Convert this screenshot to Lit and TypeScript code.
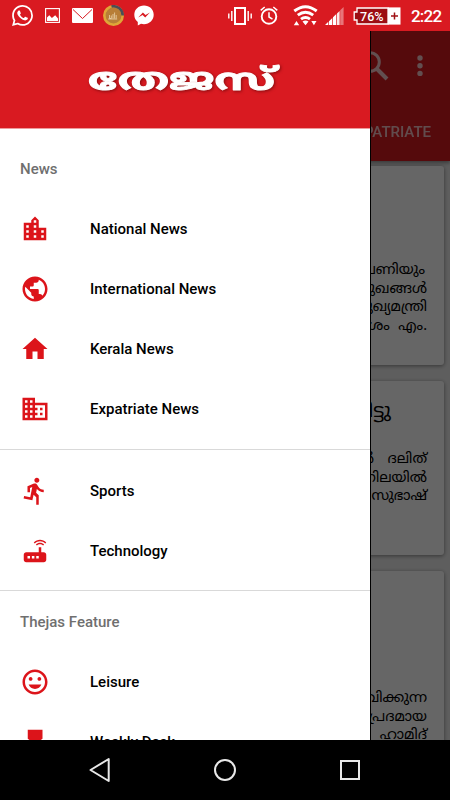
import { LitElement, html, css } from "lit";
import { customElement, property } from "lit/decorators.js";

const ICONS: Record<string, string> = {
  city: "M15 11V5l-3-3-3 3v2H3v14h18V11h-6zm-8 8H5v-2h2v2zm0-4H5v-2h2v2zm0-4H5V9h2v2zm6 8h-2v-2h2v2zm0-4h-2v-2h2v2zm0-4h-2V9h2v2zm0-4h-2V5h2v2zm6 12h-2v-2h2v2zm0-4h-2v-2h2v2z",
  globe: "M12 2C6.48 2 2 6.48 2 12s4.48 10 10 10 10-4.48 10-10S17.52 2 12 2zm-1 17.93c-3.95-.49-7-3.85-7-7.93 0-.62.08-1.21.21-1.79L9 15v1c0 1.1.9 2 2 2v1.93zm6.9-2.54c-.26-.81-1-1.39-1.9-1.39h-1v-3c0-.55-.45-1-1-1H8v-2h2c.55 0 1-.45 1-1V7h2c1.1 0 2-.9 2-2v-.41c2.93 1.19 5 4.06 5 7.41 0 2.08-.8 3.97-2.1 5.39z",
  home: "M10 20v-6h4v6h5v-8h3L12 3 2 12h3v8z",
  domain: "M12 7V3H2v18h20V7H12zM6 19H4v-2h2v2zm0-4H4v-2h2v2zm0-4H4V9h2v2zm0-4H4V5h2v2zm4 12H8v-2h2v2zm0-4H8v-2h2v2zm0-4H8V9h2v2zm0-4H8V5h2v2zm10 12h-8v-2h2v-2h-2v-2h2v-2h-2V9h8v10zm-2-8h-2v2h2v-2zm0 4h-2v2h2v-2z",
  run: "M13.49 5.48c1.1 0 2-.9 2-2s-.9-2-2-2-2 .9-2 2 .9 2 2 2zm-3.6 13.9l1-4.4 2.1 2v6h2v-7.5l-2.1-2 .6-3c1.3 1.5 3.3 2.5 5.5 2.5v-2c-1.9 0-3.5-1-4.3-2.4l-1-1.6c-.4-.6-1-1-1.7-1-.3 0-.5.1-.8.1l-5.2 2.2v4.7h2v-3.4l1.8-.7-1.6 8.1-4.9-1-.4 2 7 1.4z",
  router: "M20.2 5.9l.8-.8C19.6 3.7 17.8 3 16 3s-3.6.7-5 2.1l.8.8C13 4.8 14.5 4.2 16 4.2s3 .6 4.2 1.7zm-.9.8c-.9-.9-2.1-1.4-3.3-1.4s-2.4.5-3.3 1.4l.8.8c.7-.7 1.6-1 2.5-1 .9 0 1.8.3 2.5 1l.8-.8zM19 13h-2V9h-2v4H5c-1.1 0-2 .9-2 2v4c0 1.1.9 2 2 2h14c1.1 0 2-.9 2-2v-4c0-1.1-.9-2-2-2zM8 18H6v-2h2v2zm3.5 0h-2v-2h2v2zm3.5 0h-2v-2h2v2z",
  mood: "M11.99 2C6.47 2 2 6.48 2 12s4.47 10 9.99 10C17.52 22 22 17.52 22 12S17.52 2 11.99 2zM12 20c-4.42 0-8-3.58-8-8s3.58-8 8-8 8 3.58 8 8-3.58 8-8 8zm3.5-9c.83 0 1.5-.67 1.5-1.5S16.33 8 15.5 8 14 8.67 14 9.5s.67 1.5 1.5 1.5zm-7 0c.83 0 1.5-.67 1.5-1.5S9.33 8 8.5 8 7 8.67 7 9.5 7.67 11 8.5 11zm3.5 6.5c2.33 0 4.31-1.46 5.11-3.5H6.89c.8 2.04 2.78 3.5 5.11 3.5z",
  medal: "M6.2 2.2h11.8v7.2l-3.6 2.6 1 4-3.3 5-3.3-5 1-4-3.6-2.6z",
};

const WHATSAPP =
  "M17.472 14.382c-.297-.149-1.758-.867-2.03-.967-.273-.099-.471-.148-.67.15-.197.297-.767.966-.94 1.164-.173.199-.347.223-.644.075-.297-.15-1.255-.463-2.39-1.475-.883-.788-1.48-1.761-1.653-2.059-.173-.297-.018-.458.13-.606.134-.133.298-.347.446-.52.149-.174.198-.298.298-.497.099-.198.05-.371-.025-.52-.075-.149-.669-1.612-.916-2.207-.242-.579-.487-.5-.669-.51-.173-.008-.371-.01-.57-.01-.198 0-.52.074-.792.372-.272.297-1.04 1.016-1.04 2.479 0 1.462 1.065 2.875 1.213 3.074.149.198 2.096 3.2 5.077 4.487.709.306 1.262.489 1.694.625.712.227 1.36.195 1.871.118.571-.085 1.758-.719 2.006-1.413.248-.694.248-1.289.173-1.413-.074-.124-.272-.198-.57-.347m-5.421 7.403h-.004a9.87 9.87 0 01-5.031-1.378l-.361-.214-3.741.982.998-3.648-.235-.374a9.86 9.86 0 01-1.51-5.26c.001-5.45 4.436-9.884 9.888-9.884 2.64 0 5.122 1.03 6.988 2.898a9.825 9.825 0 012.893 6.994c-.003 5.45-4.437 9.884-9.885 9.884m8.413-18.297A11.815 11.815 0 0012.05 0C5.495 0 .16 5.335.157 11.892c0 2.096.547 4.142 1.588 5.945L.057 24l6.305-1.654a11.882 11.882 0 005.683 1.448h.005c6.554 0 11.89-5.335 11.893-11.893a11.821 11.821 0 00-3.48-8.413Z";

@customElement("status-bar")
class StatusBar extends LitElement {
  static styles = css`
    :host { display: flex; align-items: center; justify-content: space-between; height: 31px; padding: 0 10px 0 12px; background: #d91a21; box-sizing: border-box; }
    .group { display: flex; align-items: center; height: 31px; }
    svg { display: block; fill: #fff; flex: none; }
    .left { gap: 10px; }
    .pct { font: 500 12.5px Roboto, sans-serif; }
    .time { font: 500 17px/31px Roboto, sans-serif; color: #fff; margin: 2px 0 0 10px; width: 29px; white-space: nowrap; letter-spacing: -0.8px; }
    .alarm { margin-left: 8px; }
    .wifi { margin-left: 15px; }
    .signal { margin-left: 7px; }
    .battery { margin-left: 9px; }
    .pic { margin-left: 2px; margin-right: 2px; }
  `;
  render() {
    return html`
      <div class="group left">
        <svg width="21" height="21" viewBox="0 0 24 24"><path d=${WHATSAPP} /></svg>
        <svg class="pic" width="15" height="15" viewBox="0 0 15 15">
          <rect x=".6" y=".6" width="13.8" height="13.8" fill="none" stroke="#fff" stroke-width="1.1" />
          <path d="M2 13V9.5l2.3-2.3 2.6 2.7 3.3-2.7L13 10.500V13z" />
        </svg>
        <svg width="21" height="15" viewBox="0 0 21 15">
          <rect width="21" height="15" rx="1" />
          <path d="M1 1.500l9.500 9 9.500-9" fill="none" stroke="#d91a21" stroke-width="1" />
        </svg>
        <svg width="21" height="21" viewBox="0 0 21 21">
          <circle cx="10.5" cy="10.5" r="9.2" fill="#b87e37" stroke="#dfa638" stroke-width="2.6" />
          <path d="M8.500 1.500A9.200 9.200 0 0 1 19.700 10.500" fill="none" stroke="#4a4e57" stroke-width="2.6" />
          <circle cx="10.5" cy="10.5" r="7.3" fill="#b87e37" />
          <path d="M6.500 10v3.500h1.800v-3m1.700 3V9m1.600 4.500V7.500m1.600 6V10m-8 4h9" fill="none" stroke="#ecd5b0" stroke-width=".8" />
        </svg>
        <svg width="20" height="21" viewBox="0 0 20 21">
          <path d="M10 .5C4.500.5.3 4.500.3 9.800c0 3 1.300 5.600 3.500 7.300V20.500l3.200-1.700c1 .3 2 .4 3 .4 5.500 0 9.700-4 9.700-9.400S15.500.5 10 .5z" />
          <path d="M4.200 12.400l4.700-4.900 2.600 2.600 4.400-2.600-4.700 4.900-2.600-2.500z" fill="#d91a21" />
        </svg>
      </div>
      <div class="group">
        <svg width="24" height="18" viewBox="0 0 24 18">
          <path d="M7 1h10v16H7z" fill="none" stroke="#fff" stroke-width="2" />
          <path d="M.8 6.500v5M3.800 4v10M20.200 4v10M23.200 6.500v5" stroke="#fff" stroke-width="1.4" />
        </svg>
        <svg class="alarm" width="18" height="19" viewBox="0 0 18 19">
          <circle cx="9" cy="10.5" r="7.3" fill="none" stroke="#fff" stroke-width="1.9" />
          <path d="M.7 4.300L4.700 1M17.300 4.300L13.300 1M9 6.300v4.700l3.500 2.200" fill="none" stroke="#fff" stroke-width="1.5" />
        </svg>
        <svg class="wifi" width="25" height="21" viewBox="0 0 25 21">
          <g fill="none" stroke="#fff" stroke-width="2.9">
            <path d="M1.300 6Q12.500-2.700 23.700 6" />
            <path d="M4.800 10.200Q12.500 4.300 20.200 10.200" />
            <path d="M8 14.200Q12.500 10.700 17 14.200" />
          </g>
          <path d="M9.500 16.500q3-2.200 6 0l-3 3.800zM.8 20.200l2.700-4.200 2.700 4.200zM18.300 16h5.200l-2.600 4.200z" />
        </svg>
        <svg class="signal" width="19" height="18" viewBox="0 0 19 18">
          <path d="M0 18l3.300-3.200V18zM4 18v-3.800l3.300-3.300V18zM8 18v-7.700l3.300-3.200V18z" />
          <path d="M12 18V6.500l2.600-2.600V18z" opacity=".9" />
          <path d="M15.200 18V3.300L18.600 0v18z" opacity=".4" />
        </svg>
        <svg class="battery" width="48" height="18" viewBox="0 0 48 18">
          <path d="M4 1h31v16H4v-4H1.200V5H4z" fill="#9c0e13" stroke="#fff" stroke-width="1.3" />
          <rect x="35" y=".4" width="12.5" height="17.2" />
          <path d="M38 9h7M41.500 5.500v7" stroke="#a01216" stroke-width="1.5" />
          <text class="pct" x="7" y="13.5" textLength="23.5" lengthAdjust="spacingAndGlyphs">76%</text>
        </svg>
        <div class="time">2:22</div>
      </div>
    `;
  }
}

@customElement("nav-item")
class NavItem extends LitElement {
  @property() icon = "";
  @property() label = "";
  static styles = css`
    :host { display: flex; align-items: center; height: 60px; padding-left: 20px; gap: 40px; box-sizing: border-box; }
    svg { display: block; fill: #dc141a; flex: none; }
    .label { font: 500 15px/20px Roboto, sans-serif; color: #000; white-space: nowrap; }
  `;
  render() {
    return html`<svg width="30" height="30" viewBox="0 0 24 24"><path d=${ICONS[this.icon]} /></svg>
      <span class="label">${this.label}</span>`;
  }
}

@customElement("nav-drawer")
class NavDrawer extends LitElement {
  static styles = css`
    :host { display: block; background: #fff; overflow: hidden; border-right: 1px solid #000; box-sizing: border-box; }
    .brand { height: 97px; background: #d91a21; border-bottom: 1px solid #ee9a9c; display: flex; justify-content: center; align-items: center; }
    .brand svg { display: block; overflow: visible; filter: drop-shadow(1px 1.5px 1.5px rgba(70, 0, 0, 0.55)); }
    .logo { font: 700 30px "Noto Sans Malayalam", Manjari, Meera, Rachana, "Noto Sans", sans-serif; fill: #fff; stroke: #fff; stroke-width: 0.9px; stroke-linejoin: round; }
    .heading { font: 500 15px/20px Roboto, sans-serif; color: #6f6f6f; padding: 20px; }
    .first { padding-top: 30px; padding-bottom: 20px; }
    .list { padding-bottom: 10px; border-bottom: 1px solid #d9d9d9; }
    .second { padding-top: 11px; padding-bottom: 9px; }
    .heading.last { padding-top: 21px; }
  `;
  render() {
    return html`
      <div class="brand">
        <svg width="194" height="40" viewBox="0 0 194 40">
          <text class="logo" x="0" y="30" textLength="187" lengthAdjust="spacingAndGlyphs">തേജസ്</text>
        </svg>
      </div>
      <div class="heading first">News</div>
      <div class="list">
        <nav-item icon="city" label="National News"></nav-item>
        <nav-item icon="globe" label="International News"></nav-item>
        <nav-item icon="home" label="Kerala News"></nav-item>
        <nav-item icon="domain" label="Expatriate News"></nav-item>
      </div>
      <div class="list second">
        <nav-item icon="run" label="Sports"></nav-item>
        <nav-item icon="router" label="Technology"></nav-item>
      </div>
      <div class="heading last">Thejas Feature</div>
      <nav-item icon="mood" label="Leisure"></nav-item>
      <nav-item icon="medal" label="Weekly Desk"></nav-item>
    `;
  }
}

@customElement("news-feed")
class NewsFeed extends LitElement {
  static styles = css`
    :host { display: flex; flex-direction: column; background: #ececec; overflow: hidden; }
    .bar { height: 130px; flex: none; background: #d51920; box-sizing: border-box; display: flex; flex-direction: column; box-shadow: 0 2px 4px rgba(0, 0, 0, 0.4); }
    .tools { display: flex; justify-content: flex-end; align-items: center; height: 70px; padding-right: 27px; gap: 28px; }
    svg { display: block; flex: none; }
    .tab { font: 500 15px/20px Roboto, sans-serif; color: #fff; opacity: 0.72; text-align: right; padding: 21px 19px 0 0; }
    .cards { display: flex; flex-direction: column; gap: 16px; padding: 5px 6px 0; }
    .card { background: #fff; border-radius: 3px; box-shadow: 0 1px 4px rgba(0, 0, 0, 0.45); box-sizing: border-box; flex: none; padding-right: 17px; text-align: right; font: 14.4px/18.6px "Noto Sans Malayalam", Manjari, Meera, Rachana, "Noto Sans", sans-serif; color: #000; white-space: nowrap; }
    .one { height: 199px; padding-top: 96px; }
    .two { height: 174px; padding-top: 19px; }
    .three { height: 200px; padding-top: 119px; }
    .title { font-size: 19.5px; line-height: 24px; padding: 0 36px 27px 0; }
    .short { padding-right: 2px; }
    .gap { word-spacing: 4px; }
    .wide { word-spacing: 9px; }
  `;
  render() {
    return html`
      <div class="bar">
        <div class="tools">
          <svg width="30" height="30" viewBox="0 0 30 30" fill="none" stroke="#fff" opacity=".75">
            <circle cx="11" cy="11" r="9.3" stroke-width="3" /><path d="M17.5 17.5l10.5 10.5" stroke-width="4" />
          </svg>
          <svg width="6" height="22" viewBox="0 0 6 22" fill="#fff" opacity=".75">
            <circle cx="3" cy="3" r="2.7" /><circle cx="3" cy="10.7" r="2.7" /><circle cx="3" cy="18.4" r="2.7" />
          </svg>
        </div>
        <div class="tab">EXPATRIATE</div>
      </div>
      <div class="cards">
        <div class="card one"><div class="short">പണിയും</div><div>മുഖങ്ങൾ</div><div>മുഖ്യമന്ത്രി</div><div class="gap">ദേശം എം.</div></div>
        <div class="card two"><div class="title">വിട്ടു</div><div class="wide">ൽ ദലിത്</div><div>നിലയിൽ</div><div>സുഭാഷ്</div></div>
        <div class="card three"><div>വിക്കുന്ന</div><div>പ്രദമായ</div><div>ഹാമിദ്</div></div>
      </div>
    `;
  }
}

@customElement("system-nav")
class SystemNav extends LitElement {
  static styles = css`
    :host { display: flex; align-items: center; justify-content: center; gap: 101px; height: 60px; background: #000; }
    svg { display: block; fill: none; stroke: #e8e8e8; stroke-width: 2; }
  `;
  render() {
    return html`
      <svg width="24" height="26" viewBox="0 0 24 26"><path d="M20.7 2v22L2.5 13z" stroke-linejoin="round" /></svg>
      <svg width="24" height="24" viewBox="0 0 24 24"><circle cx="12" cy="12" r="10" /></svg>
      <svg width="24" height="24" viewBox="0 0 24 24"><rect x="3" y="3" width="18" height="18" /></svg>
    `;
  }
}

@customElement("app-root")
class AppRoot extends LitElement {
  static styles = css`
    :host { display: flex; flex-direction: column; width: 450px; height: 800px; overflow: hidden; background: #000; }
    .stage { position: relative; flex: none; height: 709px; overflow: hidden; }
    news-feed { height: 709px; }
    .scrim { position: absolute; inset: 0; background: rgba(0, 0, 0, 0.6); }
    nav-drawer { position: absolute; left: 0; top: 0; bottom: 0; width: 371px; }
  `;
  render() {
    return html`
      <status-bar></status-bar>
      <div class="stage">
        <news-feed></news-feed>
        <div class="scrim"></div>
        <nav-drawer></nav-drawer>
      </div>
      <system-nav></system-nav>
    `;
  }
}
